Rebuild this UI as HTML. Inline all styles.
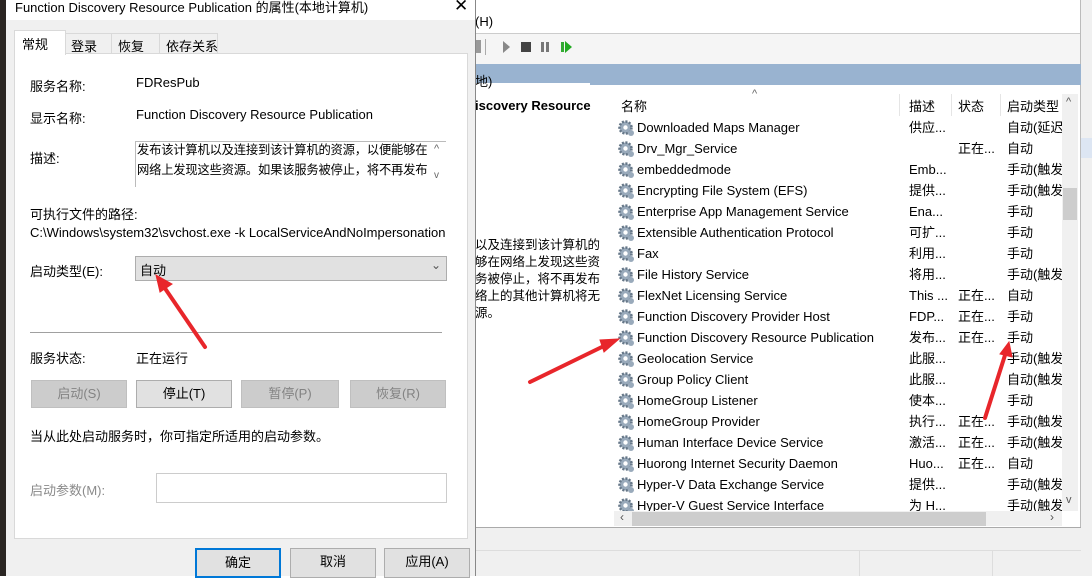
<!DOCTYPE html>
<html><head><meta charset="utf-8">
<style>
*{margin:0;padding:0;box-sizing:border-box}
body{width:1092px;height:576px;overflow:hidden;position:relative;background:#fff;font-family:"Liberation Sans","Noto Sans CJK SC",sans-serif;font-size:13px;color:#000}
.a{position:absolute;white-space:nowrap}
.btn{position:absolute;height:28px;border:1px solid #adadad;background:#e1e1e1;text-align:center;line-height:26px}
.dis{background:#ccc;border-color:#bfbfbf;color:#838383}
.row{position:absolute;left:618px;height:21px;line-height:21px;width:444px;overflow:hidden;white-space:nowrap}
.row span{position:absolute;white-space:nowrap}
</style></head><body>
<div class="a" style="left:475px;top:0;width:617px;height:576px;background:#fff"></div>
<div class="a" style="left:475px;top:14px">(H)</div>
<div class="a" style="left:475px;top:33px;width:606px;height:1px;background:#ccc"></div>
<div class="a" style="left:475px;top:34px;width:606px;height:30px;background:#f5f5f5"></div>
<svg class="a" style="left:475px;top:38px" width="120" height="18">
<rect x="1" y="2" width="5" height="13" fill="#999"/><rect x="10" y="1" width="1" height="16" fill="#aaa"/>
<path d="M28 3 L35 9 L28 15Z" fill="#888"/><rect x="46" y="4" width="10" height="10" fill="#444"/>
<rect x="66" y="4" width="3" height="10" fill="#777"/><rect x="71" y="4" width="3" height="10" fill="#777"/>
<rect x="86" y="4" width="3" height="10" fill="#3a3"/><path d="M90 3 L97 9 L90 15Z" fill="#2a2"/></svg>
<div class="a" style="left:1080px;top:38px;color:#a33;font-size:11px">97</div>
<div class="a" style="left:1080px;top:0;width:1px;height:576px;background:#bbb"></div>
<div class="a" style="left:1081px;top:0;width:11px;height:576px;background:#f0f0f0"></div>
<div class="a" style="left:1081px;top:138px;width:11px;height:20px;background:#dde6f3"></div>
<div class="a" style="left:475px;top:64px;width:606px;height:19px;background:#99b3d0"></div>
<div class="a" style="left:475px;top:71px">地)</div>
<div class="a" style="left:590px;top:83px;width:491px;height:2px;background:#99b3d0"></div>
<div class="a" style="left:475px;top:98px;font-weight:bold">iscovery Resource</div>
<div class="a" style="left:475px;top:237px;line-height:17px;font-size:12.5px">以及连接到该计算机的<br>够在网络上发现这些资<br>务被停止，将不再发布<br>络上的其他计算机将无<br>源。</div>
<div class="a" style="left:752px;top:88px;color:#666;font-size:11px">^</div>
<div class="a" style="left:621px;top:96px">名称</div>
<div class="a" style="left:899px;top:94px;width:1px;height:22px;background:#e5e5e5"></div>
<div class="a" style="left:909px;top:96px">描述</div>
<div class="a" style="left:951px;top:94px;width:1px;height:22px;background:#e5e5e5"></div>
<div class="a" style="left:958px;top:96px">状态</div>
<div class="a" style="left:1000px;top:94px;width:1px;height:22px;background:#e5e5e5"></div>
<div class="a" style="left:1007px;top:96px">启动类型</div>
<div class="a" style="left:1062px;top:94px;width:16px;height:417px;background:#f0f0f0"></div>
<div class="a" style="left:1066px;top:96px;color:#555;font-size:11px">^</div>
<div class="a" style="left:1063px;top:188px;width:14px;height:32px;background:#cdcdcd"></div>
<div class="a" style="left:1066px;top:494px;color:#555;font-size:11px">v</div>
<div id="rows"></div>
<div class="a" style="left:614px;top:511px;width:448px;height:15px;background:#f0f0f0"></div>
<div class="a" style="left:632px;top:512px;width:354px;height:14px;background:#cdcdcd"></div>
<div class="a" style="left:620px;top:510px;color:#555;font-size:12px">&lsaquo;</div>
<div class="a" style="left:1050px;top:510px;color:#555;font-size:12px">&rsaquo;</div>
<div class="a" style="left:475px;top:527px;width:606px;height:1px;background:#aaa"></div>
<div class="a" style="left:475px;top:528px;width:606px;height:48px;background:#f0f0f0"></div>
<div class="a" style="left:475px;top:550px;width:606px;height:1px;background:#ddd"></div>
<div class="a" style="left:859px;top:551px;width:1px;height:25px;background:#ddd"></div>
<div class="a" style="left:992px;top:551px;width:1px;height:25px;background:#ddd"></div>
<!-- dialog -->
<div class="a" style="left:0;top:0;width:476px;height:576px;background:#f0f0f0;border-right:1px solid #888"></div>
<div class="a" style="left:0;top:0;width:6px;height:576px;background:#2a2522"></div>
<div class="a" style="left:6px;top:0;width:469px;height:20px;background:#fff"></div>
<div class="a" style="left:15px;top:-3px;font-size:13px">Function Discovery Resource Publication 的属性(本地计算机)</div>
<div class="a" style="left:454px;top:-4px;font-size:17px">✕</div>
<div class="a" style="left:14px;top:53px;width:454px;height:486px;background:#fff;border:1px solid #d9d9d9"></div>
<div class="a" style="left:65px;top:33px;width:47px;height:21px;border:1px solid #d9d9d9;background:#f0f0f0;padding:2px 0 0 5px">登录</div>
<div class="a" style="left:111px;top:33px;width:49px;height:21px;border:1px solid #d9d9d9;background:#f0f0f0;padding:2px 0 0 6px">恢复</div>
<div class="a" style="left:159px;top:33px;width:59px;height:21px;border:1px solid #d9d9d9;background:#f0f0f0;padding:2px 0 0 6px">依存关系</div>
<div class="a" style="left:14px;top:30px;width:52px;height:25px;border:1px solid #d9d9d9;border-bottom:none;background:#fff;padding:3px 0 0 7px">常规</div>
<div class="a" style="left:30px;top:76px">服务名称:</div><div class="a" style="left:136px;top:75px">FDResPub</div>
<div class="a" style="left:30px;top:108px">显示名称:</div><div class="a" style="left:136px;top:107px">Function Discovery Resource Publication</div>
<div class="a" style="left:30px;top:148px">描述:</div>
<div class="a" style="left:135px;top:141px;width:311px;height:46px;border:1px solid #bbb;border-bottom:none;background:#fff"></div>
<div class="a" style="left:137px;top:140px;line-height:20px;font-size:12.3px;letter-spacing:-0.2px">发布该计算机以及连接到该计算机的资源，以便能够在<br>网络上发现这些资源。如果该服务被停止，将不再发布</div>
<div class="a" style="left:431px;top:142px;width:15px;height:45px;background:#fff"></div>
<div class="a" style="left:434px;top:143px;color:#666;font-size:11px">^</div><div class="a" style="left:434px;top:170px;color:#666;font-size:10px">v</div>
<div class="a" style="left:30px;top:204px">可执行文件的路径:</div>
<div class="a" style="left:30px;top:225px">C:\Windows\system32\svchost.exe -k LocalServiceAndNoImpersonation</div>
<div class="a" style="left:30px;top:261px">启动类型(E):</div>
<div class="a" style="left:135px;top:256px;width:312px;height:25px;background:#e1e1e1;border:1px solid #adadad;padding:3px 0 0 4px">自动</div>
<div class="a" style="left:431px;top:258px;color:#555;font-size:12px">⌄</div>
<div class="a" style="left:30px;top:332px;width:412px;height:1px;background:#a0a0a0"></div>
<div class="a" style="left:30px;top:348px">服务状态:</div><div class="a" style="left:136px;top:348px">正在运行</div>
<div class="btn dis" style="left:31px;top:380px;width:96px">启动(S)</div>
<div class="btn" style="left:136px;top:380px;width:96px">停止(T)</div>
<div class="btn dis" style="left:241px;top:380px;width:98px">暂停(P)</div>
<div class="btn dis" style="left:350px;top:380px;width:96px">恢复(R)</div>
<div class="a" style="left:30px;top:426px">当从此处启动服务时，你可指定所适用的启动参数。</div>
<div class="a" style="left:30px;top:480px;color:#8a8a8a">启动参数(M):</div>
<div class="a" style="left:156px;top:473px;width:291px;height:30px;border:1px solid #ccc;background:#fff"></div>
<div class="btn" style="left:195px;top:548px;width:86px;border:2px solid #0078d7;height:30px">确定</div>
<div class="btn" style="left:290px;top:548px;width:86px;height:30px">取消</div>
<div class="btn" style="left:384px;top:548px;width:86px;height:30px">应用(A)</div>
<svg class="a" style="left:0;top:0" width="1092" height="576">
<g stroke="#e8262b" stroke-width="4" fill="#e8262b" stroke-linecap="round">
<line x1="205" y1="347" x2="162" y2="284"/><path d="M156 275 L172 284 L160 292Z" stroke-width="1"/>
<line x1="530" y1="382" x2="608" y2="344"/><path d="M619 339 L604 352 L600 340Z" stroke-width="1"/>
<line x1="985" y1="418" x2="1006" y2="352"/><path d="M1009 342 L1012 357 L1000 354Z" stroke-width="1"/>
</g></svg>
<script>
var d=[["Downloaded Maps Manager","供应...","","自动(延迟."],["Drv_Mgr_Service","","正在...","自动"],["embeddedmode","Emb...","","手动(触发."],["Encrypting File System (EFS)","提供...","","手动(触发."],["Enterprise App Management Service","Ena...","","手动"],["Extensible Authentication Protocol","可扩...","","手动"],["Fax","利用...","","手动"],["File History Service","将用...","","手动(触发."],["FlexNet Licensing Service","This ...","正在...","自动"],["Function Discovery Provider Host","FDP...","正在...","手动"],["Function Discovery Resource Publication","发布...","正在...","手动"],["Geolocation Service","此服...","","手动(触发."],["Group Policy Client","此服...","","自动(触发."],["HomeGroup Listener","使本...","","手动"],["HomeGroup Provider","执行...","正在...","手动(触发."],["Human Interface Device Service","激活...","正在...","手动(触发."],["Huorong Internet Security Daemon","Huo...","正在...","自动"],["Hyper-V Data Exchange Service","提供...","","手动(触发."],["Hyper-V Guest Service Interface","为 H...","","手动(触发."]];
var h="";d.forEach(function(r,i){var t=117+i*21;h+='<div class="row" style="top:'+t+'px;'+(t+21>511?'height:'+(511-t)+'px;':'')+'"><svg style="position:absolute;left:0;top:3px" width="17" height="17"><circle cx="7.5" cy="7.5" r="6" fill="#9ab" stroke="#678" stroke-dasharray="2 1.5" stroke-width="2.5"/><circle cx="7.5" cy="7.5" r="2.2" fill="#fff"/><circle cx="13" cy="13" r="3" fill="#9ab"/></svg><span style="left:19px">'+r[0]+'</span><span style="left:291px">'+r[1]+'</span><span style="left:340px">'+r[2]+'</span><span style="left:389px">'+r[3]+'</span></div>'});
document.getElementById("rows").innerHTML=h;
</script>
</body></html>
